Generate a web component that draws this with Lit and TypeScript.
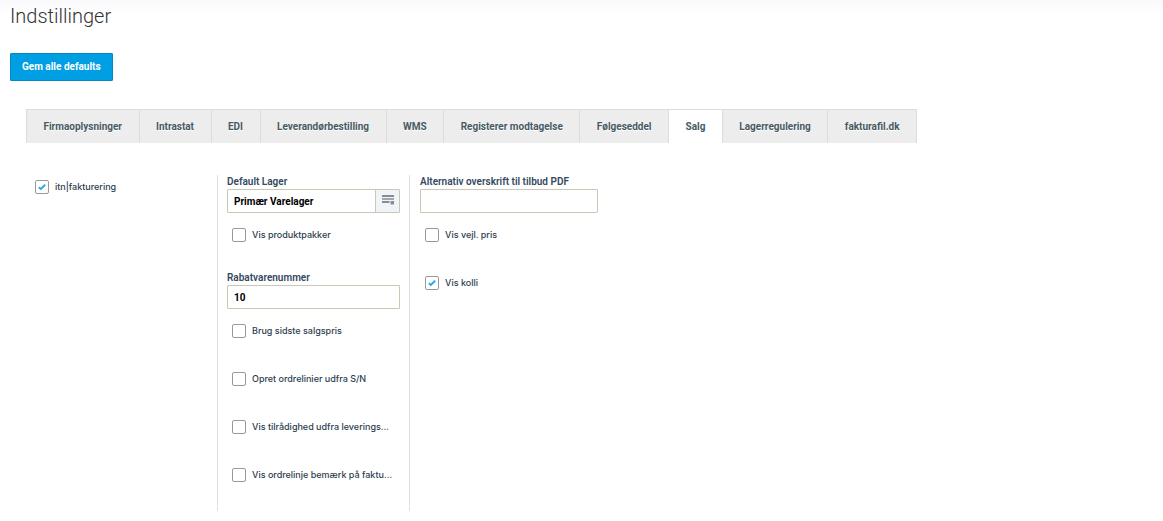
import { LitElement, html, css, nothing } from "lit";
import { customElement, property, state } from "lit/decorators.js";
import { classMap } from "lit/directives/class-map.js";

@customElement("check-field")
class CheckField extends LitElement {
  @property() label = "";
  @property({ type: Boolean }) checked = false;

  static styles = css`
    :host {
      display: block;
      height: 48px;
      box-sizing: border-box;
      padding-left: 5px;
    }
    .field {
      display: flex;
      align-items: center;
      gap: 6px;
      height: 24px;
      color: #2c3e50;
      font: 500 9px/12px Inter, sans-serif;
      white-space: nowrap;
    }
    .mark {
      display: grid;
    }
    .box,
    .tick {
      grid-area: 1 / 1;
      width: 14px;
      height: 14px;
    }
    .box {
      appearance: none;
      box-sizing: border-box;
      margin: 0;
      border: 1px solid #999;
      border-radius: 2px;
      background: #fff;
    }
    .tick {
      pointer-events: none;
    }
  `;

  render() {
    return html`
      <label class="field">
        <span class="mark">
          <input
            class="box"
            type="checkbox"
            .checked=${this.checked}
            @change=${(e: Event) => (this.checked = (e.target as HTMLInputElement).checked)}
          />
          ${this.checked
            ? html`<svg class="tick" viewBox="0 0 14 14">
                <path d="M3.8 7.2l2 1.8 4.4-4.2" fill="none" stroke="#29abe2" stroke-width="1.9" />
              </svg>`
            : nothing}
        </span>
        <span>${this.label}</span>
      </label>
    `;
  }
}

@customElement("text-field")
class TextField extends LitElement {
  @property() label = "";
  @property() value = "";
  @property({ type: Boolean }) picker = false;

  static styles = css`
    :host {
      display: block;
      height: 48px;
    }
    .label {
      display: block;
      height: 14px;
      color: #34495e;
      font: 600 10px/14px Roboto, sans-serif;
      white-space: nowrap;
    }
    .control {
      display: flex;
      box-sizing: border-box;
      height: 24px;
      border: 1px solid #c8c8b4;
      border-radius: 1px;
      background: #fff;
    }
    .input {
      flex: 1;
      min-width: 0;
      padding: 2px 6px 0;
      border: 0;
      background: none;
      color: #000;
      font: bold 10px/20px Roboto, sans-serif;
      outline: none;
    }
    .pick {
      display: flex;
      width: 24px;
      padding: 5px 0 0 6px;
      box-sizing: border-box;
      border: 0;
      border-left: 1px solid #c8c8b4;
      background: #eff4f8;
    }
    .icon {
      width: 12px;
      height: 10px;
    }
  `;

  render() {
    return html`
      <label class="label" for="input">${this.label}</label>
      <div class="control">
        <input class="input" id="input" type="text" .value=${this.value} />
        ${this.picker
          ? html`<button class="pick" type="button" aria-label=${this.label}>
              <svg class="icon" viewBox="0 0 12 10">
                <path d="M0 0h12v2H0zM0 3.2h12v1.6H0zM0 6h7.5v2H0zM8.5 6H12v3.5H8.5z" fill="#8a8d90" />
              </svg>
            </button>`
          : nothing}
      </div>
    `;
  }
}

@customElement("app-root")
class AppRoot extends LitElement {
  @state() active = "Salg";

  private tabs = [
    "Firmaoplysninger",
    "Intrastat",
    "EDI",
    "Leverandørbestilling",
    "WMS",
    "Registerer modtagelse",
    "Følgeseddel",
    "Salg",
    "Lagerregulering",
    "fakturafil.dk",
  ];

  static styles = css`
    :host {
      display: block;
      min-height: 100vh;
      box-sizing: border-box;
      background: linear-gradient(#f9f9fc, #fff 14px);
      font-family: Roboto, sans-serif;
    }
    .head {
      padding: 4px 10px 0;
    }
    .title {
      margin: 0;
      color: #333;
      font: 300 20px/24px Roboto, sans-serif;
    }
    .save {
      display: block;
      height: 28px;
      margin-top: 25px;
      padding: 0 11px;
      border: 1px solid #0588c0;
      border-radius: 1px;
      background: #009fe3;
      color: #fff;
      font: bold 10px/24px Roboto, sans-serif;
    }
    .tabs {
      display: flex;
      max-width: 891px;
      margin: 28px 26px 0;
    }
    .tab {
      flex: 1 0 auto;
      height: 34px;
      padding: 0 16px;
      border: 0 solid #dcdcdc;
      border-width: 1px 0 0 1px;
      background: #ededed;
      color: #475a64;
      font: bold 10px/32px Roboto, sans-serif;
      text-shadow: 0 1px 0 #fff;
      white-space: nowrap;
    }
    .tab:last-child {
      border-right-width: 1px;
    }
    .tab.active {
      background: #fff;
    }
    .panel {
      display: grid;
      grid-template-columns: 187px 192px 189px;
      margin: 32px 30px 0;
    }
    .column + .column {
      padding: 0 9px;
      border-left: 1px solid #e0e0e0;
    }
    .column:last-child {
      padding: 0 0 0 10px;
    }
  `;

  render() {
    return html`
      <header class="head">
        <h1 class="title">Indstillinger</h1>
        <button class="save" type="button">Gem alle defaults</button>
      </header>
      <nav class="tabs" role="tablist">
        ${this.tabs.map(
          (tab) => html`<button
            class=${classMap({ tab: true, active: tab === this.active })}
            type="button"
            role="tab"
            aria-selected=${tab === this.active}
            @click=${() => (this.active = tab)}
          >${tab}</button>`
        )}
      </nav>
      <main class="panel">
        <div class="column">
          <check-field label="itn|fakturering" checked></check-field>
        </div>
        <div class="column">
          <text-field label="Default Lager" value="Primær Varelager" picker></text-field>
          <check-field label="Vis produktpakker"></check-field>
          <text-field label="Rabatvarenummer" value="10"></text-field>
          <check-field label="Brug sidste salgspris"></check-field>
          <check-field label="Opret ordrelinier udfra S/N"></check-field>
          <check-field label="Vis tilrådighed udfra leverings…"></check-field>
          <check-field label="Vis ordrelinje bemærk på faktu…"></check-field>
        </div>
        <div class="column">
          <text-field label="Alternativ overskrift til tilbud PDF"></text-field>
          <check-field label="Vis vejl. pris"></check-field>
          <check-field label="Vis kolli" checked></check-field>
        </div>
      </main>
    `;
  }
}
